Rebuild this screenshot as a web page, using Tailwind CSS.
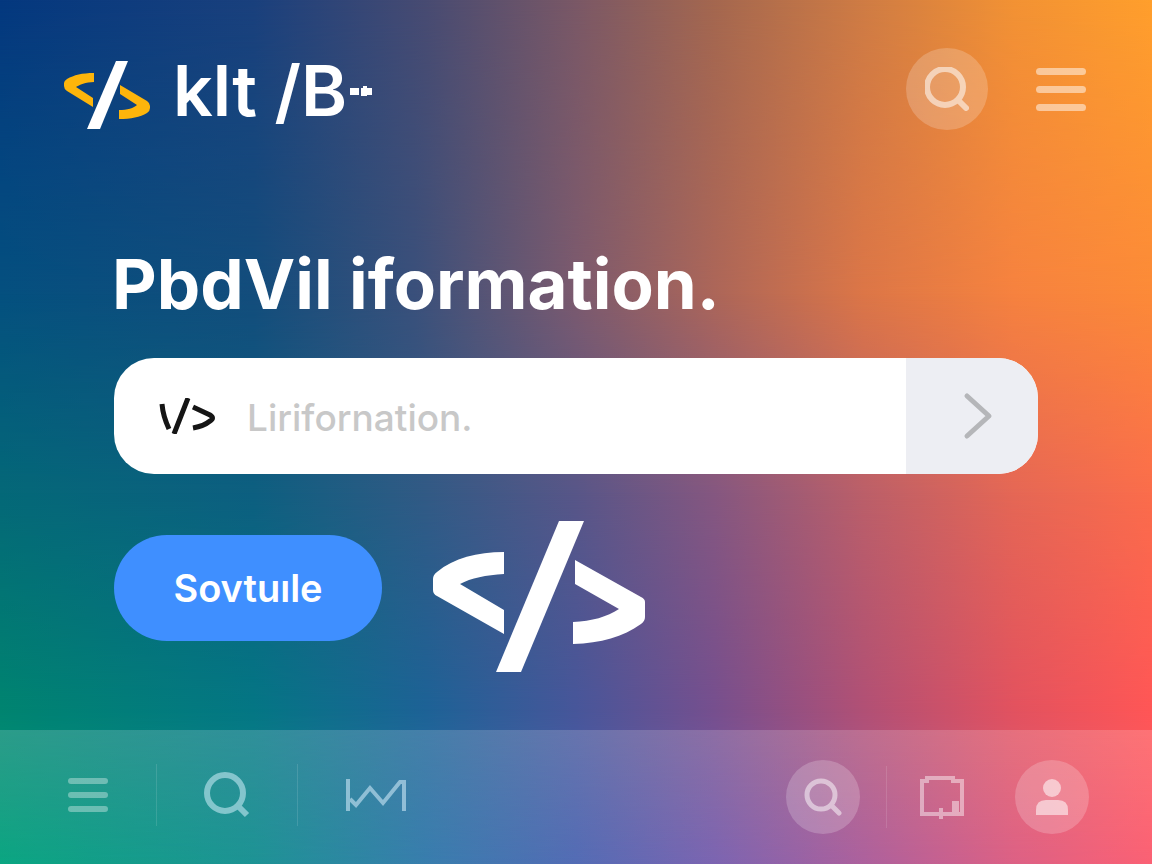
<!DOCTYPE html>
<html lang="en">
<head>
  <meta charset="UTF-8" />
  <meta name="viewport" content="width=device-width, initial-scale=1.0" />
  <title>klt /B</title>
  <script src="https://cdn.jsdelivr.net/npm/@tailwindcss/browser@4"></script>
</head>
<body class="bg-[#04387f] font-['Inter','Liberation_Sans',sans-serif] text-white">
  <div class="relative isolate min-h-screen flex flex-col">

    <!-- Background: horizontal colour rows faded into each other from top to bottom -->
    <div class="absolute inset-0 -z-10 overflow-hidden" aria-hidden="true">
      <div class="absolute inset-0 bg-[linear-gradient(to_right,#04387f_0%,#1a407d_22%,#484b72_37%,#7a5866_50%,#a4674f_62%,#cf7c44_75%,#f29234_88%,#ff9f2c_100%)]"></div>
      <div class="absolute inset-0 bg-[linear-gradient(to_right,#04507f_0%,#134d7c_22%,#3a507b_36%,#7c5a6e_50%,#ac6659_62%,#dc7647_75%,#f6823f_88%,#fc8a38_100%)] [mask-image:linear-gradient(to_bottom,transparent_0%,black_34%)]"></div>
      <div class="absolute inset-0 bg-[linear-gradient(to_right,#046878_0%,#0d5f80_22%,#325a85_37%,#585688_50%,#855780_62%,#bb5f69_75%,#e56755_88%,#fb6d4b_100%)] [mask-image:linear-gradient(to_bottom,transparent_34%,black_57%)]"></div>
      <div class="absolute inset-0 bg-[linear-gradient(to_right,#008470_0%,#047684_22%,#1d6296_37%,#47569a_50%,#764f8e_62%,#b15075_75%,#e2525f_88%,#ff5656_100%)] [mask-image:linear-gradient(to_bottom,transparent_57%,black_82%)]"></div>
      <div class="absolute inset-0 bg-[linear-gradient(to_right,#00a27c_0%,#148f90_22%,#3078aa_37%,#4c66b2_50%,#765eae_62%,#a95a99_75%,#db5a80_88%,#fb5a6e_100%)] [mask-image:linear-gradient(to_bottom,transparent_82%,black_100%)]"></div>
    </div>

    <header class="flex items-center justify-between pt-[47px] pl-16 pr-[66px]">
      <a href="#" class="flex items-center gap-[22px] pt-1" aria-label="klt /B home">
        <svg class="w-[87px] h-[70px] mt-2" viewBox="0 0 87 70" aria-hidden="true">
          <path d="M30 13v9C22 22 15 25 12 27l17 11v9L3 31Q0 29 0 26v-3Q0 21 3 19C10 15 18 13 30 13z" fill="#fdb50b" />
          <path d="M56 25l27 16q3 2 3 5v2q0 3-3 5c-7 4-16 6-28 6v-9c8 0 15-2 18-5L56 34z" fill="#fdb50b" />
          <path d="M52 1h12L36 69H23z" fill="#fff" />
        </svg>
        <span class="flex items-center gap-[2px]">
          <span class="text-[70px] leading-[80px] font-semibold">klt /B</span>
          <svg class="w-6 h-3" viewBox="0 0 24 12" fill="#fff" aria-hidden="true">
            <path d="M1 3h9v7H1zM12 3h2V1h4v2h5v7h-5v1h-6z" />
          </svg>
        </span>
      </a>
      <div class="flex items-center gap-12">
        <button type="button" aria-label="Search" class="size-[82px] rounded-full bg-white/20 flex items-center justify-center">
          <svg class="size-11" viewBox="0 0 44 44" fill="none" stroke="#fff" stroke-opacity="0.55" aria-hidden="true">
            <path d="M38 20a18 18 0 1 1-36 0a18 18 0 1 1 36 0zM33 33l8 8" stroke-width="6" stroke-linecap="round" />
          </svg>
        </button>
        <button type="button" aria-label="Menu" class="w-[50px] flex flex-col gap-[11px]">
          <span class="h-[7px] rounded-full bg-white/50"></span>
          <span class="h-[7px] rounded-full bg-white/50"></span>
          <span class="h-[7px] rounded-full bg-white/50"></span>
        </button>
      </div>
    </header>

    <main class="flex-1 px-[112px] pt-[113px] pb-14">
      <h1 class="text-[69px] leading-[80px] font-bold whitespace-nowrap">PbdVil iformation.</h1>

      <form class="mx-[2px] mt-[34px] h-[116px] flex rounded-[40px] overflow-hidden bg-white" onsubmit="return false">
        <label for="query" class="pl-[45px] pr-8 flex items-center">
          <svg class="w-14 h-9" viewBox="0 0 56 36" fill="none" stroke="#151515" stroke-width="5" role="img" aria-label="Code search">
            <path d="M3 6q1 12 7 25M29 0L15 36M34 9l17 8q5 3 0 6q-6 5-17 7" />
          </svg>
        </label>
        <input id="query" type="text" placeholder="Lirifornation." class="flex-1 min-w-0 pt-1 text-[37px] font-medium text-gray-800 placeholder:text-[#c8c8c8] outline-none" />
        <button type="submit" aria-label="Go" class="w-[132px] pl-3 bg-[#edeef3] flex items-center justify-center">
          <svg class="w-[30px] h-12" viewBox="0 0 30 48" fill="none" stroke="#b5b6b9" stroke-width="5" stroke-linecap="round" stroke-linejoin="round" aria-hidden="true">
            <path d="M4 4l22 20L4 44" />
          </svg>
        </button>
      </form>

      <div class="mx-[2px] mt-[46px] flex items-start gap-[50px]">
        <button type="button" class="mt-[15px] w-[268px] h-[106px] rounded-full bg-[#3f8fff] text-[38px] font-semibold">Sovtuıle</button>
        <svg class="w-[213px] h-[153px]" viewBox="0 0 213 153" fill="#fff" aria-hidden="true">
          <path d="M72 32v22C54 55 39 58 28 64l44 26v24L5 76q-4-2-4-6V59q0-4 4-7C22 38 45 32 72 32z" />
          <path d="M143 40l66 37q4 2 4 5v15q0 4-4 7c-18 13-40 19-68 20v-22c19-1 34-5 46-13l-44-25z" />
          <path d="M127 1h25L89 152H64z" />
        </svg>
      </div>
    </main>

    <footer class="h-[134px] pl-[67px] pr-[63px] flex items-center justify-between bg-linear-to-b from-white/17 to-white/4">
      <nav class="pb-1 flex items-center gap-[47px]" aria-label="Tools">
        <button type="button" aria-label="Menu" class="w-[42px] px-px flex flex-col gap-2">
          <span class="h-[6px] rounded-full bg-white/35"></span>
          <span class="h-[6px] rounded-full bg-white/35"></span>
          <span class="h-[6px] rounded-full bg-white/35"></span>
        </button>
        <span class="w-px h-[62px] bg-white/12"></span>
        <button type="button" aria-label="Find">
          <svg class="size-[46px] block" viewBox="0 0 46 46" fill="none" stroke="#c3e8f2" stroke-opacity="0.6" stroke-width="6" aria-hidden="true">
            <path d="M39 21a18 18 0 1 1-36 0a18 18 0 1 1 36 0zM34 34l9 9" />
          </svg>
        </button>
        <span class="w-px h-[62px] bg-white/12"></span>
        <button type="button" aria-label="Statistics">
          <svg class="w-[62px] h-9 block" viewBox="0 0 62 36" fill="none" stroke="#c0def0" stroke-opacity="0.65" stroke-width="4" aria-hidden="true">
            <path d="M3 2v32M5 22l6 6l14-17l13 15L55 5h4v29" />
          </svg>
        </button>
      </nav>
      <nav class="flex items-center" aria-label="Account">
        <button type="button" aria-label="Search" class="size-[74px] rounded-full bg-white/20 flex items-center justify-center">
          <svg class="size-[38px]" viewBox="0 0 38 38" fill="none" stroke="#fff" stroke-opacity="0.5" stroke-width="5" stroke-linecap="round" aria-hidden="true">
            <path d="M31 17a14 14 0 1 1-28 0a14 14 0 1 1 28 0zM28 28l7 7" />
          </svg>
        </button>
        <span class="ml-[26px] w-px h-[62px] bg-white/12"></span>
        <button type="button" aria-label="Board" class="ml-8">
          <svg class="w-[46px] h-11 block" viewBox="0 0 46 44" fill="none" stroke="#fff" stroke-opacity="0.45" stroke-width="4" aria-hidden="true">
            <path d="M21 39H3V6h5V3h26v3h9v33H24M22 33v11M35 38V28h3v10" />
          </svg>
        </button>
        <button type="button" aria-label="Profile" class="ml-[50px] size-[74px] rounded-full bg-white/20 flex items-center justify-center">
          <svg class="w-8 h-9" viewBox="0 0 32 36" fill="#fff" fill-opacity="0.55" aria-hidden="true">
            <circle cx="16" cy="9" r="9" />
            <path d="M0 36v-5q0-10 10-10h12q10 0 10 10v5z" />
          </svg>
        </button>
      </nav>
    </footer>
  </div>
</body>
</html>
